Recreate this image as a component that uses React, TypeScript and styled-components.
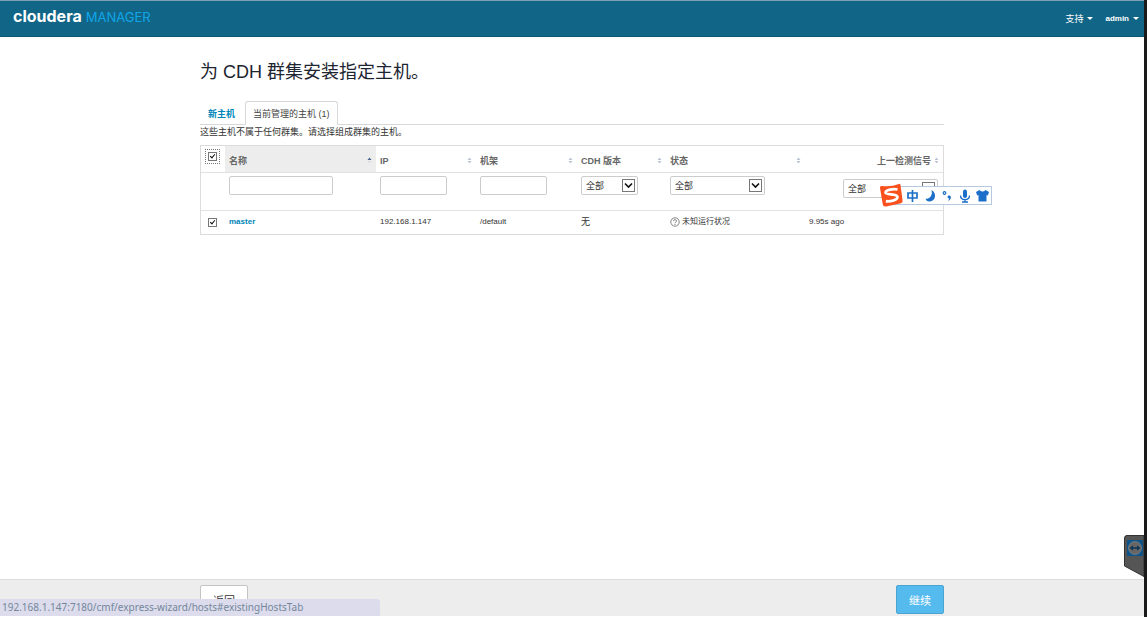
import React from "react";
import styled, { createGlobalStyle, css } from "styled-components";

const GlobalStyle = createGlobalStyle`
  *, *::before, *::after { box-sizing: border-box; }
  body {
    margin: 0;
    background: #fff;
    color: #333;
    font: 9px/12px "Liberation Sans", "Noto Sans CJK SC", sans-serif;
  }
  button, input, select { font: inherit; color: inherit; margin: 0; }
  a { color: #0085b8; text-decoration: none; }
`;

const Shell = styled.div`
  display: flex;
  flex-direction: column;
  min-height: 100vh;
  border-right: 3px solid #1a1a1a;
`;

const TopBar = styled.header`
  display: flex;
  justify-content: space-between;
  align-items: center;
  height: 37px;
  padding: 0 5px 0 13px;
  background: #116587;
  border-top: 1px solid #7f9fb2;
  border-bottom: 1px solid #0d5675;
`;

const Brand = styled.a`
  display: flex;
  align-items: baseline;
  gap: 4px;
  padding-bottom: 4px;
  font: 700 16px/20px Inter, sans-serif;
  color: #fff;
`;

const BrandProduct = styled.span`
  font-size: 13px;
  font-weight: 400;
  color: #10a5e8;
`;

const TopNav = styled.nav`
  display: flex;
  gap: 12px;
`;

const MenuButton = styled.button<{ $small?: boolean }>`
  display: flex;
  align-items: center;
  gap: 4px;
  padding: 0;
  border: 0;
  background: none;
  color: #fff;
  font-size: ${(p) => (p.$small ? 8 : 9)}px;
  font-weight: ${(p) => (p.$small ? 700 : 400)};
  &::after {
    content: "";
    border: 3px solid transparent;
    border-top-color: #fff;
    border-bottom: 0;
  }
`;

const Content = styled.main`
  flex: 1;
  width: 100%;
  max-width: 744px;
  margin: 0 auto;
  padding-top: 22px;
`;

const Title = styled.h1`
  margin: 0 0 16px;
  font-size: 18px;
  line-height: 26px;
  font-weight: 400;
  color: #1c2530;
`;

const Tabs = styled.nav`
  display: flex;
  height: 24px;
  border-bottom: 1px solid #d8d8d8;
`;

const Tab = styled.a<{ $active?: boolean }>`
  height: 24px;
  padding: 6px 8px;
  border: 1px solid transparent;
  border-radius: 3px 3px 0 0;
  ${(p) =>
    p.$active
      ? css`
          padding: 6px 7px;
          background: #fff;
          border-color: #d8d8d8;
          border-bottom-color: #fff;
          color: #444;
        `
      : css`
          padding: 6px 9px 6px 7px;
          font-weight: 700;
        `}
`;

const Intro = styled.p`
  margin: 1px 0 7px;
`;

const TableArea = styled.div`
  position: relative;
`;

const HostTable = styled.table`
  width: 100%;
  table-layout: fixed;
  border-collapse: separate;
  border-spacing: 0;
  border: 1px solid #dcdcdc;
`;

const HeadCell = styled.th<{ $sorted?: boolean }>`
  height: 26px;
  padding: 3px 4px 0;
  text-align: left;
  font-weight: 700;
  color: #666;
  background: ${(p) => (p.$sorted ? "#ededed" : "#fff")};
`;

const HeadLabel = styled.div<{ $end?: boolean }>`
  display: flex;
  align-items: center;
  justify-content: ${(p) => (p.$end ? "flex-end" : "space-between")};
  gap: 3px;
`;

const Cell = styled.td<{ $filter?: boolean; $end?: boolean; $small?: boolean }>`
  height: ${(p) => (p.$filter ? 38 : 24)}px;
  padding: ${(p) => (p.$filter ? (p.$end ? "6px 5px 0" : "3px 4px 0") : "5px 4px")};
  border-top: 1px solid #e2e2e2;
  vertical-align: top;
  text-align: ${(p) => (p.$end ? "right" : "left")};
  font-size: ${(p) => (p.$small ? 8 : 9)}px;
`;

const CheckCell = styled(Cell)`
  padding: 7px 7px 0;
`;

const CheckHead = styled(HeadCell)`
  padding: 4px 5px;
  vertical-align: top;
`;

const Focus = styled.label<{ $ring?: boolean }>`
  display: flex;
  width: fit-content;
  padding: ${(p) => (p.$ring ? 2 : 0)}px;
  outline: ${(p) => (p.$ring ? "1px dotted #777" : "none")};
`;

const Check = styled.input`
  appearance: none;
  width: 9px;
  height: 9px;
  border: 1px solid #777;
  background: #fff;
  &:checked::after {
    content: "";
    display: block;
    width: 3px;
    height: 5px;
    margin: 0 0 0 2px;
    border: solid #111;
    border-width: 0 1px 1px 0;
    transform: rotate(40deg);
  }
`;

const field = css`
  height: 19px;
  border: 1px solid #ccc;
  border-radius: 2px;
  background: #fff;
  vertical-align: top;
`;

const TextField = styled.input<{ $wide?: boolean }>`
  ${field}
  width: ${(p) => (p.$wide ? 104 : 67)}px;
  padding: 0 4px;
`;

const SelectBox = styled.span<{ $wide?: boolean }>`
  position: relative;
  display: inline-block;
  width: ${(p) => (p.$wide ? 95 : 57)}px;
  vertical-align: top;
  svg {
    position: absolute;
    top: 3px;
    right: 3px;
    pointer-events: none;
  }
`;

const Select = styled.select`
  ${field}
  appearance: none;
  width: 100%;
  padding: 0 18px 0 4px;
`;

const HostLink = styled.a`
  font-weight: 700;
`;

const Health = styled.span`
  display: flex;
  align-items: center;
  gap: 2px;
`;

const ImeBar = styled.aside`
  position: absolute;
  top: 41px;
  right: -48px;
  display: flex;
  align-items: center;
  width: 103px;
  height: 19px;
  background: #fff;
  border: 1px solid #b6c9e0;
`;

const RemoteTab = styled.aside`
  position: fixed;
  right: 3px;
  bottom: 40px;
  display: flex;
`;

const Footer = styled.footer`
  position: sticky;
  bottom: 0;
  height: 38px;
  padding-top: 5px;
  background: #ededed;
  border-top: 1px solid #ddd;
  border-bottom: 1px solid #fff;
`;

const FooterInner = styled.div`
  display: flex;
  justify-content: space-between;
  max-width: 744px;
  margin: 0 auto;
`;

const WizardButton = styled.button<{ $primary?: boolean }>`
  width: 48px;
  height: 29px;
  padding: 2px 0 0;
  border: 1px solid ${(p) => (p.$primary ? "#4aa5d0" : "#c4c4c4")};
  border-radius: 2px;
  background: ${(p) => (p.$primary ? "#55baee" : "#fff")};
  color: ${(p) => (p.$primary ? "#fff" : "#333")};
  font-size: 11px;
`;

const StatusBar = styled.div`
  position: fixed;
  left: 0;
  bottom: 1px;
  width: 380px;
  height: 17px;
  padding-left: 2px;
  border-radius: 0 3px 0 0;
  background: #dcdcec;
  color: #74879a;
  font: 10px/17px "Noto Sans", sans-serif;
`;

function SortIcon({ active }: { active?: boolean }) {
  return (
    <svg width="5" height="7" viewBox="0 0 5 7" aria-hidden="true">
      <path d="M2.5 0.5L4.5 3H0.5Z" fill={active ? "#4a6289" : "#bcc4d2"} />
      <path d="M2.5 6.5L4.5 4H0.5Z" fill={active ? "#d8dce4" : "#bcc4d2"} />
    </svg>
  );
}

function Heading({ label, active, end }: { label: string; active?: boolean; end?: boolean }) {
  return (
    <HeadLabel $end={end}>
      {label}
      <SortIcon active={active} />
    </HeadLabel>
  );
}

function FilterSelect({ label, wide }: { label: string; wide?: boolean }) {
  return (
    <SelectBox $wide={wide}>
      <Select aria-label={label}>
        <option>全部</option>
      </Select>
      <svg width="13" height="13" viewBox="0 0 13 13" aria-hidden="true">
        <rect x="0.5" y="0.5" width="12" height="12" fill="#fff" stroke="#777" />
        <path d="M3 4.5L6.5 8L10 4.5" fill="none" stroke="#111" strokeWidth="1.6" />
      </svg>
    </SelectBox>
  );
}

function QuestionIcon() {
  return (
    <svg width="10" height="10" viewBox="0 0 10 10" fill="none" stroke="#777" aria-hidden="true">
      <circle cx="5" cy="5" r="4.2" strokeWidth="0.9" />
      <path d="M3.5 4.1C3.5 2.2 6.5 2.2 6.5 4C6.5 5.1 5 5 5 6.2M5 7V7.9" />
    </svg>
  );
}

function InputMethodBar() {
  return (
    <ImeBar aria-label="输入法">
      <svg width="101" height="25" viewBox="0 0 101 25" overflow="visible" aria-hidden="true">
        <g transform="translate(-10 0)">
          <path d="M2 3Q11 4 19 1Q20 0 20.500 2L22.500 17Q23 20 20 20.500L6 23.500Q3 24 2.700 21L0 5Q-0.500 2.800 2 3Z" fill="#f9501e" />
          <path
            d="M17.500 6.500C13 5.500 6 7 5.500 9.500C5.500 12.500 17.500 10 17.500 14C17.500 17.500 9.500 18.800 5.800 18.200"
            fill="none"
            stroke="#fff"
            strokeWidth="2.700"
          />
        </g>
        <g fill="none" stroke="#1b6fc9" strokeWidth="1.700">
          <path d="M18 10H27V15H18ZM22.500 7V19" />
          <path d="M70.500 12.500C70.500 18 79.500 18 79.500 12.500M75 17V19M72 19H78" strokeWidth="1.300" />
          <circle cx="54.500" cy="10" r="1.300" strokeWidth="1.200" />
        </g>
        <g fill="#1b6fc9">
          <path d="M41.500 7C47 10 46 18 39.500 18.500C37.500 18.600 36 17.500 35.500 15.800C39.500 16 43 13 41.500 7Z" />
          <path d="M58.500 12.500C60.500 12 61.500 14 60.500 16Q59.500 17.500 58 18Q59.200 16.500 59 15.500C57.300 15.300 57 13 58.500 12.500Z" />
          <rect x="73" y="6.500" width="4" height="8.500" rx="2" />
          <path d="M89.500 7Q92.500 10 95.500 7L99 9L97.800 12.500L96.500 12V18.500H88.500V12L87.200 12.500L86 9Z" />
        </g>
      </svg>
    </ImeBar>
  );
}

export default function App() {
  return (
    <>
      <GlobalStyle />
      <Shell>
        <TopBar>
          <Brand href="#home">
            cloudera <BrandProduct>MANAGER</BrandProduct>
          </Brand>
          <TopNav>
            <MenuButton type="button">支持</MenuButton>
            <MenuButton type="button" $small>
              admin
            </MenuButton>
          </TopNav>
        </TopBar>

        <Content>
          <Title>为 CDH 群集安装指定主机。</Title>
          <Tabs>
            <Tab href="#newHostsTab">新主机</Tab>
            <Tab href="#existingHostsTab" $active>
              当前管理的主机 (1)
            </Tab>
          </Tabs>
          <Intro>这些主机不属于任何群集。请选择组成群集的主机。</Intro>

          <TableArea>
            <HostTable>
              <colgroup>
                <col style={{ width: 24 }} />
                <col style={{ width: 151 }} />
                <col style={{ width: 100 }} />
                <col style={{ width: 101 }} />
                <col style={{ width: 89 }} />
                <col style={{ width: 139 }} />
                <col />
              </colgroup>
              <thead>
                <tr>
                  <CheckHead>
                    <Focus $ring>
                      <Check type="checkbox" defaultChecked aria-label="选择全部主机" />
                    </Focus>
                  </CheckHead>
                  <HeadCell $sorted>
                    <Heading label="名称" active />
                  </HeadCell>
                  <HeadCell>
                    <Heading label="IP" />
                  </HeadCell>
                  <HeadCell>
                    <Heading label="机架" />
                  </HeadCell>
                  <HeadCell>
                    <Heading label="CDH 版本" />
                  </HeadCell>
                  <HeadCell>
                    <Heading label="状态" />
                  </HeadCell>
                  <HeadCell>
                    <Heading label="上一检测信号" end />
                  </HeadCell>
                </tr>
              </thead>
              <tbody>
                <tr>
                  <Cell $filter />
                  <Cell $filter>
                    <TextField $wide aria-label="名称" />
                  </Cell>
                  <Cell $filter>
                    <TextField aria-label="IP" />
                  </Cell>
                  <Cell $filter>
                    <TextField aria-label="机架" />
                  </Cell>
                  <Cell $filter>
                    <FilterSelect label="CDH 版本" />
                  </Cell>
                  <Cell $filter>
                    <FilterSelect label="状态" wide />
                  </Cell>
                  <Cell $filter $end>
                    <FilterSelect label="上一检测信号" wide />
                  </Cell>
                </tr>
                <tr>
                  <CheckCell>
                    <Focus>
                      <Check type="checkbox" defaultChecked aria-label="选择 master" />
                    </Focus>
                  </CheckCell>
                  <Cell $small>
                    <HostLink href="#master">master</HostLink>
                  </Cell>
                  <Cell $small>192.168.1.147</Cell>
                  <Cell $small>/default</Cell>
                  <Cell>无</Cell>
                  <Cell $small>
                    <Health>
                      <QuestionIcon />
                      未知运行状况
                    </Health>
                  </Cell>
                  <Cell $small>9.95s ago</Cell>
                </tr>
              </tbody>
            </HostTable>
            <InputMethodBar />
          </TableArea>
        </Content>

        <Footer>
          <FooterInner>
            <WizardButton type="button">返回</WizardButton>
            <WizardButton type="button" $primary>
              继续
            </WizardButton>
          </FooterInner>
        </Footer>
      </Shell>

      <StatusBar>192.168.1.147:7180/cmf/express-wizard/hosts#existingHostsTab</StatusBar>

      <RemoteTab aria-label="远程控制">
        <svg width="20" height="42" viewBox="0 0 20 42" aria-hidden="true">
          <path d="M20 0.500H3Q0.500 0.500 0.500 3V31L20 41.500Z" fill="#555" stroke="#333" />
          <rect x="3" y="5" width="16" height="16" fill="#0f5488" />
          <circle cx="11" cy="13" r="6.500" fill="#666" stroke="#8a8f94" strokeWidth="0.600" />
          <path d="M5.500 13L9 10.500V12.200H13V10.500L16.500 13L13 15.500V13.800H9V15.500Z" fill="#0d3557" />
        </svg>
      </RemoteTab>
    </>
  );
}
